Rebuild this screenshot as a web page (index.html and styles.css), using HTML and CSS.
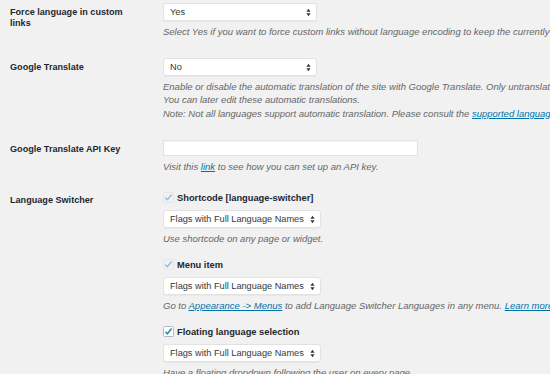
FILE: index.html
```html
<!DOCTYPE html>
<html lang="en">
<head>
<meta charset="utf-8">
<title>Settings</title>
<link rel="stylesheet" href="styles.css">
</head>
<body>
<div class="form">
  <div class="row first">
    <div class="label">Force language in custom links</div>
    <div class="field">
      <div class="select"><span>Yes</span><svg class="arrows" width="5" height="9" viewBox="0 0 5 9"><path d="M0.4 3.8 L2.5 0.8 L4.6 3.8 Z M0.4 5.2 L2.5 8.2 L4.6 5.2 Z" fill="#32373c"/></svg></div>
      <p class="desc">Select Yes if you want to force custom links without language encoding to keep the currently selected language.</p>
    </div>
  </div>
  <div class="row">
    <div class="label">Google Translate</div>
    <div class="field">
      <div class="select"><span>No</span><svg class="arrows" width="5" height="9" viewBox="0 0 5 9"><path d="M0.4 3.8 L2.5 0.8 L4.6 3.8 Z M0.4 5.2 L2.5 8.2 L4.6 5.2 Z" fill="#32373c"/></svg></div>
      <p class="desc">Enable or disable the automatic translation of the site with Google Translate. Only untranslated strings will receive a translation.<br>You can later edit these automatic translations.<br>Note: Not all languages support automatic translation. Please consult the <a href="#">supported languages list</a>.</p>
    </div>
  </div>
  <div class="row">
    <div class="label">Google Translate API Key</div>
    <div class="field">
      <div class="input"></div>
      <p class="desc">Visit this <a href="#">link</a> to see how you can set up an API key.</p>
    </div>
  </div>
  <div class="row switcher">
    <div class="label">Language Switcher</div>
    <div class="field">
      <div class="opt">
        <div class="check faint"><svg width="11" height="11" viewBox="0 0 11 11"><rect x="0.5" y="0.5" width="10" height="10" rx="1" fill="none" stroke="#e6e6e6"/><path d="M2.4 5.7 L4.4 7.7 L8.6 2.6" fill="none" stroke="#86bde2" stroke-width="1.4"/></svg><span>Shortcode [language-switcher]</span></div>
        <div class="select wide"><span>Flags with Full Language Names</span><svg class="arrows" width="5" height="9" viewBox="0 0 5 9"><path d="M0.4 3.8 L2.5 0.8 L4.6 3.8 Z M0.4 5.2 L2.5 8.2 L4.6 5.2 Z" fill="#32373c"/></svg></div>
        <p class="desc">Use shortcode on any page or widget.</p>
      </div>
      <div class="opt">
        <div class="check faint"><svg width="11" height="11" viewBox="0 0 11 11"><rect x="0.5" y="0.5" width="10" height="10" rx="1" fill="none" stroke="#e6e6e6"/><path d="M2.4 5.7 L4.4 7.7 L8.6 2.6" fill="none" stroke="#86bde2" stroke-width="1.4"/></svg><span>Menu item</span></div>
        <div class="select wide"><span>Flags with Full Language Names</span><svg class="arrows" width="5" height="9" viewBox="0 0 5 9"><path d="M0.4 3.8 L2.5 0.8 L4.6 3.8 Z M0.4 5.2 L2.5 8.2 L4.6 5.2 Z" fill="#32373c"/></svg></div>
        <p class="desc">Go to <a href="#">Appearance -&gt; Menus</a> to add Language Switcher Languages in any menu. <a href="#">Learn more in our documentation.</a></p>
      </div>
      <div class="opt">
        <div class="check"><svg width="11" height="11" viewBox="0 0 11 11"><rect x="0.5" y="0.5" width="10" height="10" rx="1" fill="#fff" stroke="#b4b9be"/><path d="M2.4 5.7 L4.4 7.7 L8.6 2.6" fill="none" stroke="#1e8cbe" stroke-width="1.6"/></svg><span>Floating language selection</span></div>
        <div class="select wide"><span>Flags with Full Language Names</span><svg class="arrows" width="5" height="9" viewBox="0 0 5 9"><path d="M0.4 3.8 L2.5 0.8 L4.6 3.8 Z M0.4 5.2 L2.5 8.2 L4.6 5.2 Z" fill="#32373c"/></svg></div>
        <p class="desc">Have a floating dropdown following the user on every page.</p>
      </div>
    </div>
  </div>
</div>
</body>
</html>
```
FILE: styles.css
```css
html, body {
  margin: 0;
  padding: 0;
}
body {
  background: #f1f1f1;
  font-family: "Liberation Sans", Arial, sans-serif;
  color: #23282d;
  overflow: hidden;
}
.form {
  padding-left: 10px;
}
.row {
  display: grid;
  grid-template-columns: 153px 1fr;
  padding: 10px 0;
}
.row.first {
  padding-top: 3px;
}
.row.switcher {
  padding-top: 8px;
}
.label {
  font-weight: bold;
  font-size: 9.1px;
  line-height: 11px;
  color: #23282d;
  padding-top: 4px;
  padding-right: 25px;
}
.field {
  min-width: 0;
  white-space: nowrap;
  overflow: hidden;
}
.select {
  display: flex;
  align-items: center;
  justify-content: space-between;
  width: 154px;
  height: 18px;
  box-sizing: border-box;
  background: #fff;
  border: 1px solid #e2e2e2;
  border-radius: 3px;
  padding: 0 5px 0 6px;
  font-size: 9.2px;
  color: #32373c;
  box-shadow: 0 1px 1px rgba(0, 0, 0, 0.04);
}
.select.wide {
  width: 158px;
}
.arrows {
  flex: none;
}
.input {
  width: 255px;
  height: 16px;
  box-sizing: border-box;
  background: #fff;
  border: 1px solid #e2e2e2;
  box-shadow: inset 0 1px 2px rgba(0, 0, 0, 0.05);
}
.desc {
  margin: 3.5px 0 0;
  font-style: italic;
  font-size: 9.5px;
  line-height: 13.5px;
  color: #666;
}
.desc a {
  color: #0073aa;
  text-decoration: underline;
}
.opt + .opt {
  margin-top: 13px;
}
.check {
  display: flex;
  align-items: center;
  gap: 3px;
  height: 13px;
  margin-bottom: 6px;
  font-weight: bold;
  font-size: 9.3px;
  color: #23282d;
}
.check svg {
  flex: none;
}
```
